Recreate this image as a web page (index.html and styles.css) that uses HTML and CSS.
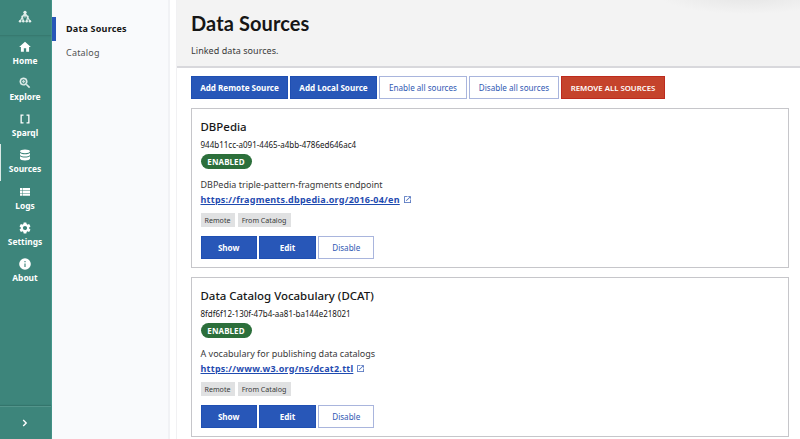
FILE: index.html
```html
<!DOCTYPE html>
<html lang="en">
<head>
<meta charset="utf-8">
<title>Data Sources</title>
<link rel="stylesheet" href="styles.css">
</head>
<body>
<div class="app">
  <nav class="rail">
    <div class="brand">
      <svg width="14" height="14" viewBox="0 0 14 14" fill="none" stroke="#d8e8e4" stroke-width="1.3"><path d="M7 2.5V7.500M7 3L4.3 7 2.3 11M7 3l2.700 4 2 4M4.300 7l1 4M9.700 7l-1 4"/><g fill="#e6f1ee" stroke="none"><circle cx="7" cy="2.3" r="1.6"/><circle cx="4.4" cy="6.5" r="1.1"/><circle cx="9.6" cy="6.5" r="1.1"/><circle cx="2.1" cy="11.3" r="1.3"/><circle cx="5.3" cy="11.3" r="1.2"/><circle cx="8.7" cy="11.3" r="1.2"/><circle cx="11.9" cy="11.3" r="1.3"/></g></svg>
    </div>
    <div class="links">
      <a class="link"><svg class="big" viewBox="0 0 24 24"><path d="M10 20v-6h4v6h5v-8h3L12 3 2 12h3v8z"/></svg><span>Home</span></a>
      <a class="link"><svg class="big soft" viewBox="0 0 24 24"><path d="M15.5 14h-.79l-.28-.27A6.47 6.47 0 0 0 16 9.500 6.500 6.500 0 1 0 9.500 16c1.610 0 3.090-.59 4.230-1.570l.27.28v.79l5 4.990L20.490 19l-4.990-5zm-6 0C7.010 14 5 11.990 5 9.500S7.010 5 9.500 5 14 7.010 14 9.500 11.990 14 9.500 14zM12 10h-2v2H9v-2H7V9h2V7h1v2h2v1z" stroke="#e1eeeb" stroke-width=".8"/></svg><span>Explore</span></a>
      <a class="link"><svg viewBox="0 0 24 24"><path d="M3 3h6v2.400H5.600v13.200H9V21H3zM15 3h6v18h-6v-2.400h3.400V5.400H15z"/></svg><span>Sparql</span></a>
      <a class="link current"><svg viewBox="0 0 24 24"><path d="M2 4.500C2 2.500 6.500 1 12 1s10 1.500 10 3.500S17.500 8.500 12 8.500 2 6.700 2 4.500zM2 8c2 1.800 6 2.600 10 2.600S20 9.800 22 8v3.300c0 2-4.500 3.700-10 3.700S2 13.300 2 11.300zM2 14.600c2 1.700 6 2.500 10 2.500s8-.8 10-2.500V19c0 2.200-4.500 4-10 4S2 21.200 2 19z"/></svg><span>Sources</span></a>
      <a class="link"><svg viewBox="0 0 24 24"><path d="M2 4h4v4.500H2zM7 4h15v4.500H7zM2 9.600h4V14H2zM7 9.600h15V14H7zM2 15.200h4v4.500H2zM7 15.200h15v4.500H7z"/></svg><span>Logs</span></a>
      <a class="link"><svg class="big" viewBox="0 0 24 24"><path d="M19.140 12.940c.04-.3.060-.61.060-.94 0-.32-.02-.64-.07-.94l2.030-1.580a.49.49 0 0 0 .12-.61l-1.920-3.320a.488.488 0 0 0-.59-.22l-2.390.96c-.5-.38-1.030-.7-1.620-.94l-.36-2.540a.484.484 0 0 0-.48-.41h-3.840c-.24 0-.43.17-.47.41l-.36 2.540c-.59.24-1.130.57-1.620.94l-2.390-.96c-.22-.08-.47 0-.59.22L2.740 8.870c-.12.21-.08.47.12.61l2.030 1.580c-.05.3-.09.63-.09.94s.02.64.07.94l-2.030 1.580a.49.49 0 0 0-.12.61l1.920 3.320c.12.22.37.29.59.22l2.390-.96c.5.38 1.030.7 1.620.94l.36 2.540c.05.24.24.41.48.41h3.840c.24 0 .44-.17.47-.41l.36-2.540c.59-.24 1.130-.56 1.620-.94l2.390.96c.22.080.47 0 .59-.22l1.920-3.320c.12-.22.070-.47-.12-.61l-2.010-1.580zM12 15.600A3.610 3.610 0 0 1 8.400 12c0-1.980 1.620-3.600 3.600-3.600s3.600 1.620 3.600 3.600-1.620 3.600-3.600 3.600z"/></svg><span>Settings</span></a>
      <a class="link"><svg class="big" viewBox="0 0 24 24"><path d="M12 2a10 10 0 1 0 0 20 10 10 0 0 0 0-20zm1 15h-2v-6h2v6zm0-8h-2V7h2v2z"/></svg><span>About</span></a>
    </div>
    <div class="expand"><svg width="6" height="8" viewBox="0 0 6 8" fill="none" stroke="#fff" stroke-width="1.400"><path d="M1.200 1l3 3-3 3"/></svg></div>
  </nav>
  <aside class="side">
    <a class="tab active">Data Sources</a>
    <a class="tab">Catalog</a>
  </aside>
  <main class="main">
    <header class="head">
      <h1>Data Sources</h1>
      <p>Linked data sources.</p>
    </header>
    <section class="content">
      <div class="bar">
        <button class="btn solid remote">Add Remote Source</button>
        <button class="btn solid local">Add Local Source</button>
        <button class="btn line enable-all">Enable all sources</button>
        <button class="btn line disable-all">Disable all sources</button>
        <button class="btn danger">REMOVE ALL SOURCES</button>
      </div>
      <article class="card">
        <h2>DBPedia</h2>
        <div class="uid">944b11cc-a091-4465-a4bb-4786ed646ac4</div>
        <div class="badge">ENABLED</div>
        <p class="desc">DBPedia triple-pattern-fragments endpoint</p>
        <div class="url"><a>https://fragments.dbpedia.org/2016-04/en</a><svg viewBox="0 0 24 24"><path d="M19 19H5V5h7V3H3v18h18v-9h-2v7zM14 3v2h3.590l-9.830 9.830 1.410 1.410L19 6.410V10h2V3h-7z"/></svg></div>
        <div class="tags"><span class="remote-tag">Remote</span><span>From Catalog</span></div>
        <div class="actions"><button class="btn solid">Show</button><button class="btn solid">Edit</button><button class="btn line">Disable</button></div>
      </article>
      <article class="card">
        <h2>Data Catalog Vocabulary (DCAT)</h2>
        <div class="uid">8fdf6f12-130f-47b4-aa81-ba144e218021</div>
        <div class="badge">ENABLED</div>
        <p class="desc">A vocabulary for publishing data catalogs</p>
        <div class="url"><a>https://www.w3.org/ns/dcat2.ttl</a><svg viewBox="0 0 24 24"><path d="M19 19H5V5h7V3H3v18h18v-9h-2v7zM14 3v2h3.590l-9.830 9.830 1.410 1.410L19 6.410V10h2V3h-7z"/></svg></div>
        <div class="tags"><span class="remote-tag">Remote</span><span>From Catalog</span></div>
        <div class="actions"><button class="btn solid">Show</button><button class="btn solid">Edit</button><button class="btn line">Disable</button></div>
      </article>
    </section>
  </main>
</div>
</body>
</html>
```
FILE: styles.css
```css
* { box-sizing: border-box; }
body { margin: 0; font-family: "Noto Sans", "Open Sans", sans-serif; color: #161616; }
h1, h2, p { margin: 0; }
.app { display: flex; width: 800px; height: 439px; overflow: hidden; background: #fff; }

.rail { display: flex; flex-direction: column; width: 52px; background: #3d857b; color: #fff; border-right: 1px solid #46978c; }
.brand { height: 36px; display: flex; justify-content: center; padding-top: 10px; padding-right: 2px; border-bottom: 1px solid #377a70; box-shadow: 0 1px 1px #3b8177; }
.links { flex: 1; }
.link { display: flex; flex-direction: column; align-items: center; height: 36.15px; padding: 5px 2px 0 0; border-left: 1px solid transparent; font-size: 8.400px; font-weight: 700; line-height: 12px; }
.link svg { width: 12px; height: 12px; fill: #fff; margin-bottom: 2px; }
.link svg.big { width: 14px; height: 14px; margin: -1px 0 1px; }
.link svg.soft { fill: #e1eeeb; }
.link.current { border-left-color: #dbe9e6; }
.expand { height: 33px; display: flex; align-items: center; justify-content: center; padding-right: 2px; border-top: 1px solid #53958b; box-shadow: 0 -1px 1px #34756c; }

.side { width: 118px; background: #f9fafc; border-right: 2px solid #f1f2f5; padding-top: 17px; }
.tab { display: flex; align-items: center; height: 24px; padding: 0 0 2px 10px; border-left: 4px solid transparent; font-size: 9px; color: #525252; letter-spacing: .2px; }
.tab.active { border-left-color: #2857b8; color: #161616; font-weight: 700; }

.main { flex: 1; border-left: 1px solid #f1f1f3; margin-left: 6px; }
.head { height: 68px; background: radial-gradient(ellipse 90px 20px at 570px -6px, #e4e4e4, #f3f3f3); border-bottom: 2px solid #d8d8dc; padding: 10px 14px 0; }
.head h1 { font-family: Lato, sans-serif; font-size: 20px; line-height: 26px; font-weight: 700; letter-spacing: .1px; }
.head p { margin-top: 8px; font-size: 9px; line-height: 14px; color: #393939; letter-spacing: .05px; }

.content { padding: 8px 11px 0 14px; }
.bar { display: flex; gap: 2px; }
.btn { font-family: inherit; height: 23px; padding: 0; border: 1px solid; font-size: 8.100px; line-height: 12px; white-space: nowrap; }
.solid { background: #2857b8; border-color: #1f4fb2; color: #fff; font-weight: 700; }
.line { background: #fff; border-color: #a9b5dd; color: #3159b3; }
.danger { width: 104px; background: #c5432c; border-color: #bd2a1d; color: #fff; font-weight: 600; font-size: 7.800px; }
.remote { width: 97px; }
.local { width: 87px; }
.enable-all { width: 88px; }
.disable-all { width: 90px; }

.card { height: 160px; margin-top: 9px; padding: 10px 8.500px 0; border: 1px solid #c6c6ca; }
.card h2 { font-size: 11.450px; line-height: 16px; font-weight: 500; }
.uid { margin-top: 4px; font-size: 8px; line-height: 12px; }
.badge { display: flex; align-items: center; justify-content: center; width: 51px; height: 15px; margin-top: 3px; border-radius: 8px; background: #2c6f3b; color: #fff; font-size: 8px; font-weight: 700; letter-spacing: .1px; }
.desc { margin-top: 9px; font-size: 9px; line-height: 14px; color: #393939; }
.url { display: flex; align-items: center; height: 14px; font-size: 9px; font-weight: 700; color: #1f4bb0; letter-spacing: .24px; }
.url a { text-decoration: underline; }
.url svg { width: 9px; height: 9px; margin-left: 3px; fill: #3f64b8; }
.tags { display: flex; gap: 3px; margin-top: 7px; }
.tags span { width: 53px; height: 14px; background: #e0e1e2; color: #393939; font-size: 7.100px; line-height: 14px; text-align: center; }
.tags .remote-tag { width: 34px; }
.actions { display: flex; gap: 2.500px; margin-top: 9px; }
.actions .btn { width: 56.300px; }
```
